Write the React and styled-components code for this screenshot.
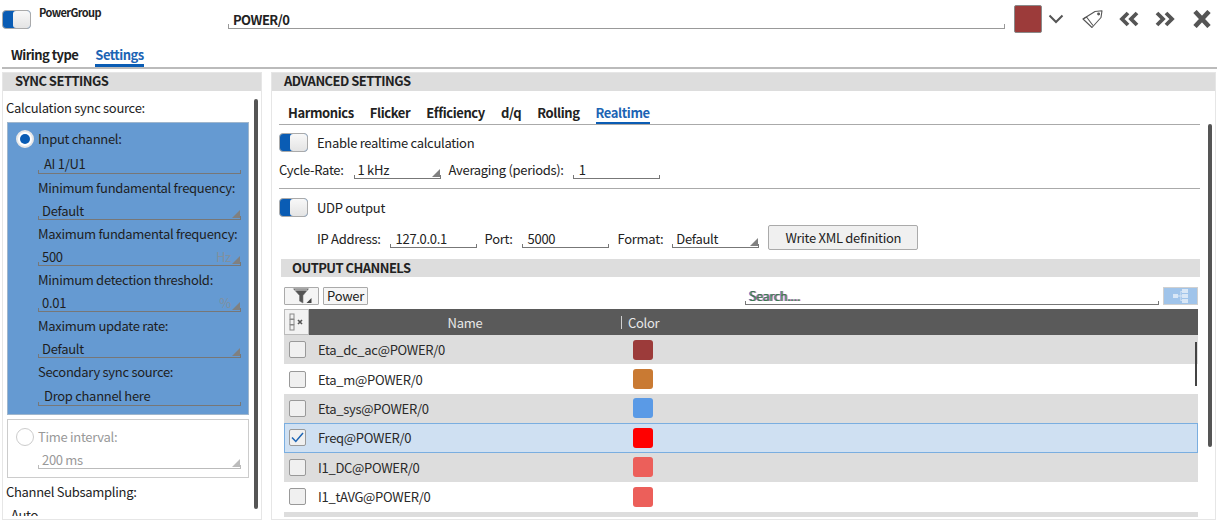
import React from "react";
import styled, { createGlobalStyle } from "styled-components";

const Global = createGlobalStyle`
  html, body { margin: 0; padding: 0; background: #fff; }
  body { font-family: "Noto Sans CJK JP", "Noto Sans", sans-serif; font-size: 13px; letter-spacing: -.3px; color: #222; overflow: hidden; }
  #root { width: 1223px; height: 524px; overflow: hidden; }
  * { box-sizing: border-box; }
`;

const Page = styled.div`
  width: 1223px; height: 524px; display: flex; flex-direction: column;
`;
const TopBar = styled.header`
  height: 44px; flex: none; display: flex; align-items: flex-start; padding: 5px 12px 0 2px;
`;
const ToggleBox = styled.div`
  width: 29px; height: 19px; flex: none; border: 1px solid #aaa; border-radius: 4px;
  background: #0a5cb4; overflow: hidden; display: flex;
  margin-top: ${p => p.$top || 0}px;
  &::before { content: ""; width: 10px; flex: none; }
  &::after { content: ""; flex: 1; background: linear-gradient(#f8f8f8, #e4e4e4); border-radius: 3px 0 0 3px; }
`;
const GroupName = styled.div`
  font-size: 11px; font-weight: 700; letter-spacing: -.6px; line-height: 14px; margin: 0 0 0 8px; width: 189px; flex: none;
`;
const NameField = styled.div`
  width: 777px; flex: none; height: 24px; font-weight: 700; letter-spacing: -.55px; line-height: 29px;
  padding-left: 5px; position: relative; border-bottom: 1px solid #999;
  &::before, &::after { content: ""; position: absolute; bottom: 0; width: 1px; height: 4px; background: #999; }
  &::before { left: 0; } &::after { right: 0; }
`;
const Swatch = styled.div`
  width: 28px; height: 28px; flex: none; margin-left: 9px; background: #9c3b3a; border: 1px solid #8a8a8a; border-radius: 2px;
`;
const IconSlot = styled.div`
  flex: none; display: flex; margin-left: ${p => p.$gap}px; margin-top: ${p => p.$top || 0}px;
`;
const MainTabs = styled.nav`
  display: flex; flex: none; gap: 17px; height: 25px; margin: 0 6px 0 2px; padding-left: 9px; border-bottom: 2px solid #bbb;
`;
const Tab = styled.div`
  font-weight: 700; letter-spacing: -.55px; line-height: 22px; height: 23px;
  color: ${p => (p.$active ? "#1c64b4" : "#222")};
  border-bottom: ${p => (p.$active ? "3px solid #0a5cb4" : "none")};
`;
const Panels = styled.main`
  flex: 1; display: flex; gap: 9px; padding: 3px 8px 4px 2px; min-height: 0;
`;
const Panel = styled.section`
  border: 1px solid #e6e6e6; display: flex; flex-direction: column; overflow: hidden; height: 448px;
  width: ${p => p.$w}px; flex: none;
`;
const PanelTitle = styled.h2`
  margin: -1px 0 0; height: 19px; flex: none; background: #ddd; font-size: 13px; font-weight: 700; letter-spacing: -.55px; line-height: 18px; padding-left: 12px;
  color: #222;
`;
const PanelBody = styled.div`
  flex: 1; display: flex; min-height: 0;
`;
const Scroll = styled.div`
  flex: 1; min-width: 0; overflow: hidden;
`;
const Thumb = styled.div`
  flex: none; width: 4px; height: ${p => p.$h}px; background: #555; border-radius: 2px;
  margin: ${p => p.$m};
`;
const PlainLabel = styled.div`
  line-height: 23px; height: 23px; margin: ${p => p.$top || 0}px 0 0 -1px;
`;
const LeftScroll = styled(Scroll)`
  padding: 5px 0 0 4px; margin-bottom: 3px;
`;
const ChannelBox = styled.div`
  width: 242px; margin-top: ${p => (p.$on ? 3 : 0)}px; padding: 3px 7px 8px 9px;
  background: ${p => (p.$on ? "#659ad2" : "#fff")};
  border: 1px solid ${p => (p.$on ? "#9fb6cd" : "#ccc")};
  color: ${p => (p.$on ? "#1e1e1e" : "#999")};
`;
const RadioRow = styled.div`
  display: flex; align-items: center; height: 27px; gap: 4px; padding-bottom: ${p => (p.$on ? 2 : 0)}px;
`;
const Radio = styled.span`
  width: 18px; height: 18px; border-radius: 50%; flex: none; margin-left: -1px;
  background: #fff; border: ${p => (p.$on ? "2px solid #e8e8e8" : "1px solid #ccc")};
  display: flex; align-items: center; justify-content: center;
  &::after { content: ""; width: 10px; height: 10px; border-radius: 50%; background: ${p => (p.$on ? "#0a5cb4" : "transparent")}; }
`;
const Stack = styled.div`
  padding-left: 21px;
`;
const FieldLabel = styled.div`
  height: 23px; line-height: 23px;
`;
const Field = styled.div`
  position: relative; height: ${p => p.$h || 23}px; line-height: ${p => p.$lh || (p.$h || 23) + 1}px; border-bottom: 1px solid ${p => p.$line || "#777"};
  margin-bottom: ${p => p.$mb || 0}px;
  padding-left: ${p => p.$pad ?? 4}px; width: ${p => (p.$w ? p.$w + "px" : "auto")}; flex: none;
  &::before, &::after { content: ""; position: absolute; bottom: 0; width: 1px; height: 3px; background: ${p => p.$line || "#777"}; }
  &::before { left: 0; } &::after { right: 0; }
`;
const Grip = styled.span`
  position: absolute; right: 1px; bottom: 1px; width: 0; height: 0;
  border-style: solid; border-width: 0 0 8px 8px; border-color: transparent transparent ${p => p.$c || "#808080"} transparent;
`;
const Unit = styled.span`
  position: absolute; right: 10px; top: 0; color: #80909f;
`;
const GapRow = styled.div`
  height: 4px;
`;
const RightScroll = styled(Scroll)`
  padding: 0 0 0 7px;
`;
const SubTabs = styled.nav`
  display: flex; gap: 16px; height: 34px; padding: 12px 0 0 9px; border-bottom: 1px solid #aaa; width: 921px;
`;
const SubTab = styled.div`
  font-weight: 700; letter-spacing: -.4px; line-height: 19px; height: 21px;
  color: ${p => (p.$active ? "#1c64b4" : "#222")};
  border-bottom: ${p => (p.$active ? "2px solid #0a5cb4" : "none")};
`;
const ToggleRow = styled.div`
  display: flex; align-items: center; gap: 9px; height: ${p => p.$h}px;
`;
const InlineRow = styled.div`
  display: flex; align-items: flex-end; height: ${p => p.$h}px; padding-left: ${p => p.$pl || 0}px;
  width: 921px; border-bottom: ${p => (p.$line ? "1px solid #aaa" : "none")}; padding-bottom: ${p => p.$pb || 0}px;
`;
const InlineLabel = styled.span`
  line-height: 18px; margin: ${p => p.$m || 0}; flex: none;
`;
const WriteButton = styled.button`
  height: 25px; width: 150px; flex: none; margin: 0 0 -2px 9px; font: inherit; letter-spacing: inherit; color: #222;
  background: #f0f0f0; border: 1px solid #aaa; border-radius: 2px; padding: 0;
`;
const Section = styled.div`
  width: 919px; margin-left: 2px; margin-top: 11px;
`;
const SectionTitle = styled.h3`
  margin: 0; height: 18px; background: #ddd; font-size: 13px; font-weight: 700; letter-spacing: -.55px; line-height: 18px; padding-left: 11px; width: 919px;
`;
const FilterBar = styled.div`
  display: flex; align-items: flex-end; height: 32px; padding: 0 2px 4px 3px;
`;
const FilterButton = styled.button`
  width: 35px; height: 18px; padding: 0; background: #f4f4f4; border: 1px solid #aaa; border-radius: 1px; display: flex; align-items: center; justify-content: center; flex: none;
`;
const Chip = styled.div`
  width: 45px; height: 18px; margin-left: 4px; border: 1px solid #aaa; border-radius: 1px; background: #f6f6f6; line-height: 15px; text-align: center; flex: none;
`;
const SearchText = styled.span`
  color: rgba(40,130,70,.85); font-size: 12.5px; letter-spacing: -.25px; text-shadow: 1px 0 rgba(200,40,40,.6), -1px 0 rgba(40,60,210,.7);
`;
const TreeButton = styled.div`
  width: 35px; height: 18px; margin-left: 4px; background: #a0c4ea; border: 1px solid #d0d0d0; display: flex; align-items: center; justify-content: center; flex: none;
`;
const Table = styled.div`
  width: 914px; margin-left: 3px; position: relative;
`;
const HeaderRow = styled.div`
  height: 26px; background: #5a5a5a; display: flex; align-items: center; color: #e8e8e8; padding-top: 1px;
`;
const ColumnButton = styled.div`
  width: 25px; height: 26px; margin-top: -1px; background: #f2f2f2; border: 1px solid #bbb; flex: none; display: flex; align-items: center; justify-content: center;
`;
const NameHead = styled.div`
  width: 312px; text-align: center; flex: none; line-height: 26px;
`;
const ColorHead = styled.div`
  border-left: 1px solid #d0d0d0; padding-left: 6px; height: 13px; line-height: 13px;
`;
const Row = styled.div`
  height: 29.4px; display: flex; align-items: center;
  background: ${p => (p.$sel ? "#cfe0f2" : p.$odd ? "#ddd" : "#fff")};
  border: ${p => (p.$sel ? "1px solid #7aaee0" : "none")};
  padding-left: ${p => (p.$sel ? 4 : 5)}px;
`;
const Check = styled.span`
  width: 17px; height: 17px; background: #f0f0f0; border: 1px solid #999; border-radius: 2px; flex: none; display: flex; align-items: center; justify-content: center;
`;
const RowName = styled.span`
  width: 315px; flex: none; margin-left: 12px; color: #2a2a2a;
`;
const ColorDot = styled.span`
  width: 20px; height: 20px; border-radius: 3px; flex: none; background: ${p => p.$c};
`;
const TableThumb = styled.div`
  position: absolute; top: 33px; right: 1px; width: 2px; height: 44px; background: #444;
`;
const Foot = styled.div`
  height: 5px; margin-top: 1px; background: #ddd; width: 914px; margin-left: 3px;
`;
const Filler = styled.div`
  flex: 1;
`;

const Chevron = () => (
  <svg width="16" height="16" viewBox="0 0 16 16" fill="none" stroke="#555" strokeWidth="2">
    <path d="M1.5 4.5 8 11l6.5-6.5" />
  </svg>
);
const TagIcon = () => (
  <svg width="22" height="20" viewBox="0 0 22 20" fill="none" stroke="#555" strokeWidth="1.1" strokeLinejoin="round">
    <path d="M1 10 13 2.500l7-.8-1 6.800L10 18.500Z" />
    <path d="M1 10l3.500-2M4.500 8l6.500 8.500" />
    <circle cx="16.600" cy="5" r=".9" fill="#555" />
  </svg>
);
const DoubleChevron = ({ flip }) => (
  <svg width="22" height="16" viewBox="0 0 22 16" fill="none" stroke="#555" strokeWidth="3.8" style={flip ? { transform: "scaleX(-1)" } : undefined}>
    <path d="M10 2 4 8l6 6M19 2l-6 6 6 6" />
  </svg>
);
const CloseIcon = () => (
  <svg width="18" height="18" viewBox="0 0 18 18" fill="none" stroke="#555" strokeWidth="4.6">
    <path d="M2 1.500 16 16.500M16 1.500 2 16.500" />
  </svg>
);
const FilterIcon = () => (
  <svg width="20" height="16" viewBox="0 0 20 16">
    <path d="M1.500.8h15l-5.500 6.700V15L7.500 13V7.500Z" fill="#555" stroke="#777" strokeWidth=".6" />
    <path d="M3 2h12" stroke="#ddd" strokeWidth="1" />
    <path d="M19.500 10v5H14.500Z" fill="#444" />
  </svg>
);
const ColumnsIcon = () => (
  <svg width="17" height="18" viewBox="0 0 17 18" fill="none">
    <rect x="2" y="1" width="4" height="5" stroke="#888" />
    <rect x="2" y="6.500" width="4" height="5" stroke="#888" />
    <rect x="2" y="12" width="4" height="5" stroke="#888" />
    <path d="M10 7l4 4M14 7l-4 4" stroke="#555" strokeWidth="1.6" />
  </svg>
);
const TreeIcon = () => (
  <svg width="18" height="14" viewBox="0 0 18 14" fill="#d9e7f6">
    <rect x="1" y="5" width="5" height="4" />
    <rect x="10" y="0" width="6" height="4" />
    <rect x="10" y="5" width="6" height="4" />
    <rect x="10" y="10" width="6" height="4" />
    <path d="M6 6.500h2.500V2H10v.8H9.200v3.700H10v1H9.200v3.700H10v.8H8.500V7.500H6Z" />
  </svg>
);
const Tick = () => (
  <svg width="13" height="11" viewBox="0 0 13 11" fill="none" stroke="#1c64b4" strokeWidth="1.5">
    <path d="M1 5.500 4.800 9.500 12 1" />
  </svg>
);

const syncFields = [
  { label: "Minimum fundamental frequency:", value: "Default", grip: true },
  { label: "Maximum fundamental frequency:", value: "500", unit: "Hz", grip: true },
  { label: "Minimum detection threshold:", value: "0.01", unit: "%", grip: true },
  { label: "Maximum update rate:", value: "Default", grip: true },
  { label: "Secondary sync source:", value: "Drop channel here", pad: 6, tall: true },
];

const channels = [
  { name: "Eta_dc_ac@POWER/0", color: "#9c3b3a" },
  { name: "Eta_m@POWER/0", color: "#c97a33" },
  { name: "Eta_sys@POWER/0", color: "#5a9ae6" },
  { name: "Freq@POWER/0", color: "#ff0000", sel: true },
  { name: "I1_DC@POWER/0", color: "#ec5f5a" },
  { name: "I1_tAVG@POWER/0", color: "#ec5f5a" },
];

export default function App() {
  return (
    <Page>
      <Global />
      <TopBar>
        <ToggleBox $top={5} />
        <GroupName>PowerGroup</GroupName>
        <NameField>POWER/0</NameField>
        <Swatch />
        <IconSlot $gap={6} $top={6}><Chevron /></IconSlot>
        <IconSlot $gap={18} $top={4}><TagIcon /></IconSlot>
        <IconSlot $gap={14} $top={6}><DoubleChevron /></IconSlot>
        <IconSlot $gap={14} $top={6}><DoubleChevron flip /></IconSlot>
        <IconSlot $gap={17} $top={5}><CloseIcon /></IconSlot>
      </TopBar>
      <MainTabs>
        <Tab>Wiring type</Tab>
        <Tab $active>Settings</Tab>
      </MainTabs>
      <Panels>
        <Panel $w={260}>
          <PanelTitle>SYNC SETTINGS</PanelTitle>
          <PanelBody>
            <LeftScroll>
              <PlainLabel>Calculation sync source:</PlainLabel>
              <ChannelBox $on>
                <RadioRow $on><Radio $on />Input channel:</RadioRow>
                <Stack>
                  <Field $pad={6} $h={21} $lh={22} $mb={2}>AI 1/U1</Field>
                  {syncFields.map(f => (
                    <React.Fragment key={f.label}>
                      <FieldLabel>{f.label}</FieldLabel>
                      <Field $pad={f.pad} $h={f.tall ? 23 : 21} $lh={f.tall ? 26 : 24} $mb={f.tall ? 0 : 2}>
                        {f.value}
                        {f.unit && <Unit>{f.unit}</Unit>}
                        {f.grip && <Grip />}
                      </Field>
                    </React.Fragment>
                  ))}
                </Stack>
              </ChannelBox>
              <GapRow />
              <ChannelBox>
                <RadioRow><Radio />Time interval:</RadioRow>
                <Stack>
                  <Field $line="#bbb" $h={19} $lh={20}>200 ms<Grip $c="#bbb" /></Field>
                </Stack>
              </ChannelBox>
              <PlainLabel $top={2}>Channel Subsampling:</PlainLabel>
              <Field $pad={4}>Auto</Field>
            </LeftScroll>
            <Thumb $h={410} $m="8px 3px 0 0" />
          </PanelBody>
        </Panel>
        <Panel $w={945}>
          <PanelTitle>ADVANCED SETTINGS</PanelTitle>
          <PanelBody>
            <RightScroll>
              <SubTabs>
                <SubTab>Harmonics</SubTab>
                <SubTab>Flicker</SubTab>
                <SubTab>Efficiency</SubTab>
                <SubTab>d/q</SubTab>
                <SubTab>Rolling</SubTab>
                <SubTab $active>Realtime</SubTab>
              </SubTabs>
              <ToggleRow $h={34}><ToggleBox />Enable realtime calculation</ToggleRow>
              <InlineRow $h={30} $pb={9} $line>
                <InlineLabel $m="0 10px 0 0">Cycle-Rate:</InlineLabel>
                <Field $w={87} $h={18} $lh={17}>1 kHz<Grip /></Field>
                <InlineLabel $m="0 9px 0 8px">Averaging (periods):</InlineLabel>
                <Field $w={87} $h={18} $lh={17} $pad={6}>1</Field>
              </InlineRow>
              <ToggleRow $h={36}><ToggleBox />UDP output</ToggleRow>
              <InlineRow $h={23} $pl={38}>
                <InlineLabel $m="0 9px 0 0">IP Address:</InlineLabel>
                <Field $w={87} $h={18} $lh={17} $pad={6}>127.0.0.1</Field>
                <InlineLabel $m="0 9px 0 8px">Port:</InlineLabel>
                <Field $w={87} $h={18} $lh={17} $pad={6}>5000</Field>
                <InlineLabel $m="0 9px">Format:</InlineLabel>
                <Field $w={87} $h={18} $lh={17}>Default<Grip /></Field>
                <WriteButton>Write XML definition</WriteButton>
              </InlineRow>
              <Section>
                <SectionTitle>OUTPUT CHANNELS</SectionTitle>
                <FilterBar>
                  <FilterButton><FilterIcon /></FilterButton>
                  <Chip>Power</Chip>
                  <Filler />
                  <Field $w={414} $h={18} $lh={17} $pad={4}><SearchText>Search....</SearchText></Field>
                  <TreeButton><TreeIcon /></TreeButton>
                </FilterBar>
                <Table>
                  <HeaderRow>
                    <ColumnButton><ColumnsIcon /></ColumnButton>
                    <NameHead>Name</NameHead>
                    <ColorHead>Color</ColorHead>
                  </HeaderRow>
                  {channels.map((c, i) => (
                    <Row key={c.name} $odd={i % 2 === 0} $sel={c.sel}>
                      <Check>{c.sel && <Tick />}</Check>
                      <RowName>{c.name}</RowName>
                      <ColorDot $c={c.color} />
                    </Row>
                  ))}
                  <TableThumb />
                </Table>
                <Foot />
              </Section>
            </RightScroll>
            <Thumb $h={323} $m="33px 3px 0 0" />
          </PanelBody>
        </Panel>
      </Panels>
    </Page>
  );
}
